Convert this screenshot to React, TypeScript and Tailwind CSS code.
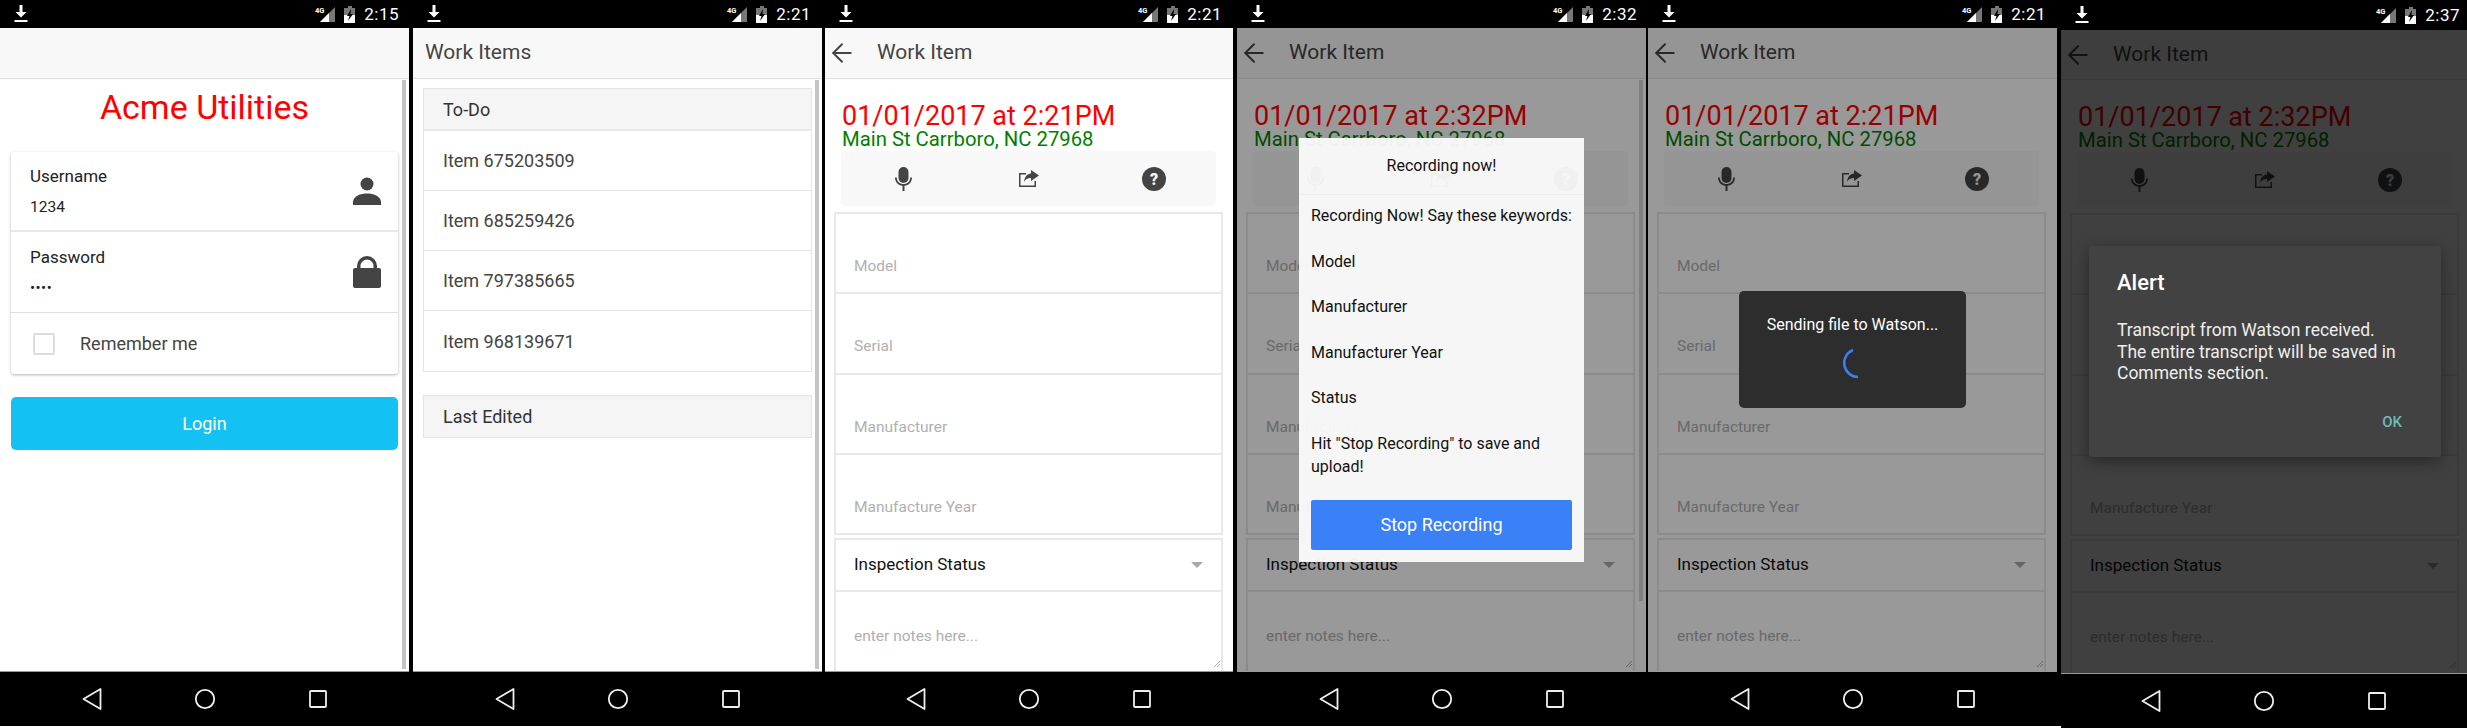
import { ArrowLeft } from "lucide-react";
import type { ReactNode } from "react";

const font = "font-['Roboto',sans-serif]";

function StatusBar({ time, pr = "pr-[11px]", h = "h-[28px]" }: { time: string; pr?: string; h?: string }) {
  return (
    <div className={`${h} ${pr} pl-[14px] bg-black flex items-center text-white shrink-0`}>
      <svg width="14" height="18" viewBox="0 0 14 18" fill="white">
        <path d="M5.5 0h3v7h4L7 12.5 1.500 7h4z" />
        <rect x="0.5" y="15" width="13" height="2" />
      </svg>
      <div className="ml-auto flex items-center">
        <svg width="21" height="17" viewBox="0 0 21 17">
          <path d="M20 1v15H5z" fill="#777" />
          <path d="M14 7v9H5z" fill="white" />
          <text x="0" y="7" fontSize="7.5" fontWeight="700" fill="white" fontFamily="Roboto">4G</text>
        </svg>
        <svg className="ml-[8px]" width="12" height="17" viewBox="0 0 12 17">
          <path d="M4 0h4v2h3v15H0V2h4z" fill="#777" />
          <path d="M0 9h11v8H0z" fill="white" />
          <path d="M7 3 3 10h2.5L4 15l5-7H6.500z" fill="black" />
        </svg>
        <span className="ml-[8px] text-[17px] tracking-[0.5px] leading-none">{time}</span>
      </div>
    </div>
  );
}

function NavBar() {
  return (
    <div className="h-[55px] bg-black flex items-center justify-center gap-[92px] shrink-0 border-t border-[#999]">
      <svg width="20" height="22" viewBox="0 0 20 22" fill="none" stroke="#eee" strokeWidth="1.800" strokeLinejoin="round">
        <path d="M18.500 1v20L1.500 11z" />
      </svg>
      <svg width="22" height="22" viewBox="0 0 22 22" fill="none" stroke="#eee" strokeWidth="1.800">
        <circle cx="11" cy="11" r="9.200" />
      </svg>
      <svg width="20" height="20" viewBox="0 0 20 20" fill="none" stroke="#eee" strokeWidth="1.800" strokeLinejoin="round">
        <rect x="2" y="2" width="16" height="16" rx="1" />
      </svg>
    </div>
  );
}

function Header({ title, back, h = "h-[51px]" }: { title?: string; back?: boolean; h?: string }) {
  return (
    <div className={`${h} bg-[#f8f8f8] border-b border-[#e0e0e0] flex items-center shrink-0 text-[#444] text-[21px]`}>
      {back && <ArrowLeft className="ml-[2px] mr-[20px] text-[#444]" size={30} strokeWidth={1.500} />}
      {title && <span className={back ? "" : "ml-[12px]"}>{title}</span>}
    </div>
  );
}

function LoginScreen() {
  return (
    <div className={`w-[409px] flex flex-col bg-white ${font}`}>
      <StatusBar time="2:15" pr="pr-[10px]" />
      <Header />
      <div className="relative flex-1 px-[11px]">
        <div className="w-[387px]">
          <h1 className="text-center text-[#ff0000] text-[34px] leading-[40px] pt-[8px] mb-[25px]">Acme Utilities</h1>
          <div className="rounded-[3px] bg-white shadow-[0_1px_3px_rgba(0,0,0,0.3)]">
            <div className="h-[80px] flex items-center justify-between pl-[19px] pr-[17px] border-b-2 border-[#e8e8e8]">
              <div className="text-[#222]">
                <div className="text-[17px] leading-[20px] mb-[11px]">Username</div>
                <div className="text-[15.5px] leading-[20px]">1234</div>
              </div>
              <svg width="28" height="28" viewBox="0 0 28 28" fill="#444">
                <circle cx="14" cy="7" r="6.500" />
                <path d="M0 28v-3c0-6 8-8.500 14-8.500S28 19 28 25v3z" />
              </svg>
            </div>
            <div className="h-[81px] flex items-center justify-between pl-[19px] pr-[17px] border-b border-[#e0e0e0]">
              <div className="text-[#222]">
                <div className="text-[17px] leading-[20px] mb-[11px]">Password</div>
                <div className="text-[15px] leading-[20px] tracking-[0.5px]">••••</div>
              </div>
              <svg width="28" height="32" viewBox="0 0 28 32" fill="#444">
                <path d="M4 13V10a10 10 0 0 1 20 0v3h-3.500V10a6.500 6.500 0 0 0-13 0v3z" />
                <rect x="0" y="12" width="28" height="20" rx="2" />
              </svg>
            </div>
            <div className="h-[61px] flex items-center pl-[22px]">
              <div className="w-[22px] h-[22px] border-2 border-[#ddd] rounded-[2px]" />
              <span className="ml-[25px] text-[18px] text-[#444]">Remember me</span>
            </div>
          </div>
          <button className="w-full h-[53px] mt-[23px] rounded-[5px] bg-[#13c1f3] text-white text-[18px]">Login</button>
        </div>
        <div className="absolute right-[3px] top-[1px] bottom-[2px] w-[4px] bg-[#c4c4c4]" />
      </div>
      <NavBar />
    </div>
  );
}

const items = ["Item 675203509", "Item 685259426", "Item 797385665", "Item 968139671"];

function ListScreen() {
  return (
    <div className={`w-[409px] ml-[4px] flex flex-col bg-white ${font}`}>
      <StatusBar time="2:21" />
      <Header title="Work Items" />
      <div className="relative flex-1 pl-[10px] pt-[9px]">
        <div className="w-[389px] border border-[#e4e4e4]">
          <div className="h-[42px] bg-[#f5f5f5] border-b-2 border-[#e8e8e8] flex items-center pl-[19px] text-[18px] text-[#333]">To-Do</div>
          {items.map((item, i) => (
            <div key={item} className={`h-[60px] flex items-center pl-[19px] text-[18px] text-[#444] ${i < 3 ? "border-b border-[#e4e4e4]" : ""}`}>
              {item}
            </div>
          ))}
        </div>
        <div className="w-[389px] mt-[23px] h-[43px] bg-[#f5f5f5] border border-[#e4e4e4] flex items-center pl-[19px] text-[18px] text-[#333]">Last Edited</div>
        <div className="absolute right-[3px] top-[1px] bottom-[2px] w-[4px] bg-[#c4c4c4]" />
      </div>
      <NavBar />
    </div>
  );
}

const fields = ["Model", "Serial", "Manufacturer", "Manufacture Year"];

function WorkItemBody({ stamp, scroll }: { stamp: string; scroll?: boolean }) {
  return (
    <div className="relative flex-1 overflow-hidden pl-[9px]">
      <div className="w-[389px]">
        <div className="pl-[8px] pt-[23px]">
          <div className="text-[#ff0000] text-[27px] leading-[28px] whitespace-nowrap">{stamp}</div>
          <div className="text-[#008000] text-[20.3px] leading-[18px] whitespace-nowrap">Main St Carrboro, NC 27968</div>
        </div>
        <div className="ml-[7px] w-[375px] h-[55px] mt-[3px] bg-[#f8f8f8] rounded-[4px] flex items-center text-[#444]">
          <div className="w-[125px] flex justify-center">
            <svg width="17" height="24" viewBox="0 0 17 24" fill="#444">
              <rect x="3.500" y="0" width="10" height="16" rx="5" />
              <path d="M0 10.500h1.800c0 4 3 6.500 6.700 6.500s6.700-2.500 6.700-6.500H17c0 4.500-3.200 7.800-7.500 8.300V24h-2v-5.200C3.200 18.300 0 15 0 10.500z" />
            </svg>
          </div>
          <div className="w-[125px] flex justify-center">
            <svg width="21" height="17" viewBox="0 0 21 17" fill="#444">
              <path d="M1 3h7v1.500H2.500v11h14V11H18v6H1z" />
              <path d="M13 0l8 5.500-8 5.500V8c-3.500 0-5.500 1-7 4 .5-5 3-8 7-8.500z" />
            </svg>
          </div>
          <div className="w-[125px] flex justify-center">
            <svg width="24" height="24" viewBox="0 0 24 24">
              <circle cx="12" cy="12" r="12" fill="#444" />
              <text x="12" y="17.5" textAnchor="middle" fontSize="16" fontWeight="900" fill="#f8f8f8" fontFamily="Roboto">?</text>
            </svg>
          </div>
        </div>
        <div className="mt-[6px] border-2 border-[#e8e8e8] border-b-0">
          {fields.map((f) => (
            <div key={f} className="h-[80.25px] flex items-end pb-[14px] pl-[18px] border-b-2 border-[#e8e8e8] text-[15.5px] text-[#b0b0b0]">
              {f}
            </div>
          ))}
        </div>
        <div className="mt-[3px] border-2 border-[#e8e8e8] border-b-0">
          <div className="h-[52px] flex items-center justify-between pl-[18px] pr-[18px] border-b-2 border-[#e8e8e8] text-[17px] text-[#111]">
            Inspection Status
            <svg width="12" height="6" viewBox="0 0 12 6" fill="#aaa"><path d="M0 0h12L6 6z" /></svg>
          </div>
          <div className="relative h-[90px] pt-[33px] pl-[18px] text-[15.5px] text-[#b0b0b0]">
            enter notes here...
            <svg className="absolute right-[1px] top-[69px]" width="6" height="6" viewBox="0 0 6 6" stroke="#999" strokeWidth="0.800">
              <path d="M0 6 6 0M3 6l3-3" />
            </svg>
          </div>
        </div>
      </div>
      {scroll && <div className="absolute right-[3px] top-[1px] h-[521px] w-[4px] bg-[#d5d5d5]" />}
    </div>
  );
}

function WorkItemScreen({
  time,
  stamp,
  dim,
  scroll,
  children,
  className,
  pr,
  statusH,
  headerH,
}: {
  time: string;
  stamp: string;
  dim?: string;
  scroll?: boolean;
  children?: ReactNode;
  className: string;
  pr?: string;
  statusH?: string;
  headerH?: string;
}) {
  return (
    <div className={`${className} flex flex-col bg-white ${font}`}>
      <StatusBar time={time} pr={pr} h={statusH} />
      <div className="relative flex-1 flex flex-col min-h-0">
        <Header title="Work Item" back h={headerH} />
        <WorkItemBody stamp={stamp} scroll={scroll} />
        {dim && <div className={`absolute inset-0 ${dim}`} />}
        {children}
      </div>
      <NavBar />
    </div>
  );
}

export default function App() {
  return (
    <div className="w-[2467px] h-[728px] bg-white flex overflow-hidden">
      <div className="w-[2061px] h-[726px] bg-black flex">
        <LoginScreen />
        <ListScreen />
        <WorkItemScreen className="w-[408px] ml-[3px]" time="2:21" stamp="01/01/2017 at 2:21PM" />
        <WorkItemScreen className="w-[409px] ml-[4px]" time="2:32" pr="pr-[9px]" stamp="01/01/2017 at 2:32PM" dim="bg-black/40" scroll>
          <div className="absolute left-[62px] top-[110px] w-[285px] h-[424px] bg-[#fbfbfb]/95 text-[#111] text-[16px]">
            <div className="h-[57px] flex items-center justify-center border-b border-[#eee]">Recording now!</div>
            <div className="px-[12px] pt-[9px] leading-[23px]">
              <p className="mb-[22.5px] whitespace-nowrap">Recording Now! Say these keywords:</p>
              <p className="mb-[22.5px]">Model</p>
              <p className="mb-[22.5px]">Manufacturer</p>
              <p className="mb-[22.5px]">Manufacturer Year</p>
              <p className="mb-[22.5px]">Status</p>
              <p>Hit "Stop Recording" to save and upload!</p>
            </div>
            <button className="ml-[12px] mt-[22px] w-[261px] h-[50px] block bg-[#3a80f6] rounded-[2px] text-white text-[18px]">Stop Recording</button>
          </div>
        </WorkItemScreen>
        <WorkItemScreen className="w-[409px] ml-[2px]" time="2:21" stamp="01/01/2017 at 2:21PM" dim="bg-black/40">
          <div className="absolute left-[91px] top-[263px] w-[227px] h-[117px] rounded-[5px] bg-[#2d2d2d] text-white text-[16px] leading-[20px] text-center pt-[24px]">
            Sending file to Watson...
            <div className="flex justify-center mt-[13px]">
              <svg width="32" height="32" viewBox="0 0 32 32" fill="none" stroke="#3a80f6" strokeWidth="2.500">
                <path d="M16 2A14 14 0 0 0 21 29" />
              </svg>
            </div>
          </div>
        </WorkItemScreen>
      </div>
      <WorkItemScreen className="w-[406px] h-[728px]" time="2:37" pr="pr-[7px]" statusH="h-[30px]" headerH="h-[50px]" stamp="01/01/2017 at 2:32PM" dim="bg-black/75">
        <div className="absolute left-[28px] top-[216px] w-[352px] h-[211px] rounded-[2px] bg-[#424242] text-white shadow-[0_4px_16px_rgba(0,0,0,0.4)] px-[28px] pt-[23px]">
          <div className="text-[22px] font-medium leading-[28px]">Alert</div>
          <div className="mt-[23px] text-[17.5px] leading-[21.7px] text-[#eee]">
            Transcript from Watson received.
            <br />
            The entire transcript will be saved in Comments section.
          </div>
          <div className="absolute right-[39px] bottom-[25px] text-[15px] leading-[20px] font-medium text-[#6cbfb5]">OK</div>
        </div>
      </WorkItemScreen>
    </div>
  );
}
